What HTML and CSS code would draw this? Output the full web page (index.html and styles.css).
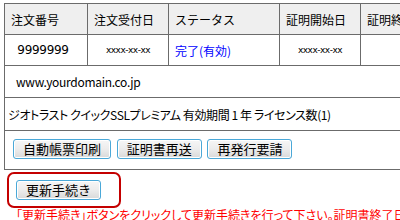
FILE: index.html
```html
<!DOCTYPE html>
<html lang="ja">
<head>
    <meta charset="UTF-8">
    <title>証明書詳細</title>
    <link rel="stylesheet" href="styles.css">
</head>
<body>
    <table class="order">
        <tr class="head">
            <th class="c1">注文番号</th>
            <th class="c2">注文受付日</th>
            <th class="c3">ステータス</th>
            <th class="c4">証明開始日</th>
            <th class="c5">証明終了日</th>
        </tr>
        <tr class="data">
            <td class="num">9999999</td>
            <td class="date">xxxx-xx-xx</td>
            <td class="status">完了(有効)</td>
            <td class="date">xxxx-xx-xx</td>
            <td class="date">xxxx-xx-xx</td>
        </tr>
        <tr>
            <td colspan="5" class="domain">www.yourdomain.co.jp</td>
        </tr>
        <tr>
            <td colspan="5" class="product">ジオトラスト クイックSSLプレミアム 有効期間 1 年 ライセンス数(1)</td>
        </tr>
        <tr>
            <td colspan="5" class="actions">
                <button class="btn">自動帳票印刷</button>
                <button class="btn">証明書再送</button>
                <button class="btn">再発行要請</button>
            </td>
        </tr>
    </table>

    <div class="renew">
        <button class="btn">更新手続き</button>
    </div>
    <p class="notice">「更新手続き」ボタンをクリックして更新手続きを行って下さい。証明書終了日(2012年xx月xx日)までに手続きを行って下さい。</p>
</body>
</html>
```

FILE: styles.css
```css
body {
    margin: 3px 0 0 4px;
    background: #fff;
    font-family: "Noto Sans CJK JP", sans-serif;
    font-size: 12px;
    color: #000;
    overflow: hidden;
}
.order {
    border-collapse: collapse;
    width: 500px;
    table-layout: fixed;
}
.order th,
.order td {
    border: 1px solid #6b6b6b;
    padding: 0;
}
.order th {
    background: #efefef;
    font-weight: normal;
    text-align: left;
    height: 30px;
    padding-left: 6px;
    font-size: 12px;
}
.c1 { width: 76px; }
.c2 { width: 74px; }
.c3 { width: 104px; }
.c4 { width: 74px; }
.c5 { width: 138px; }
.data td {
    height: 30px;
    text-align: center;
}
.num {
    font-family: "DejaVu Sans", sans-serif;
    font-size: 12px;
    letter-spacing: -0.3px;
    padding-right: 6px !important;
}
.date {
    font-family: "DejaVu Sans", sans-serif;
    font-size: 9px;
    letter-spacing: -0.5px;
}
.data .status {
    text-align: left;
    padding-left: 6px;
    color: #0000ff;
}
.domain {
    height: 31px;
    padding-left: 11px !important;
    letter-spacing: -0.3px;
}
.product {
    height: 32px;
    padding-left: 3px !important;
    font-feature-settings: "palt";
    letter-spacing: -0.4px;
}
.actions {
    height: 36px;
    padding: 0 0 2px 8px !important;
}
.btn {
    height: 20px;
    padding: 0 9px;
    margin-right: 3px;
    border: 1px solid #4aa8d8;
    border-radius: 3px;
    background: linear-gradient(#f6f6f6 0%, #ececec 50%, #d9d9d9 100%);
    box-shadow: inset 0 0 0 1px #fff;
    font-family: "Noto Sans CJK JP", sans-serif;
    font-size: 13px;
    line-height: 18px;
    color: #000;
}
.renew {
    width: 92px;
    margin: 2px 0 0 3px;
    padding: 6px 11px 6px 7px;
    border: 2px solid #c40000;
    border-radius: 7px;
}
.notice {
    margin: 0 0 0 12px;
    white-space: nowrap;
    color: #ff0000;
    font-size: 12px;
    line-height: 14px;
    font-feature-settings: "palt";
}
```
